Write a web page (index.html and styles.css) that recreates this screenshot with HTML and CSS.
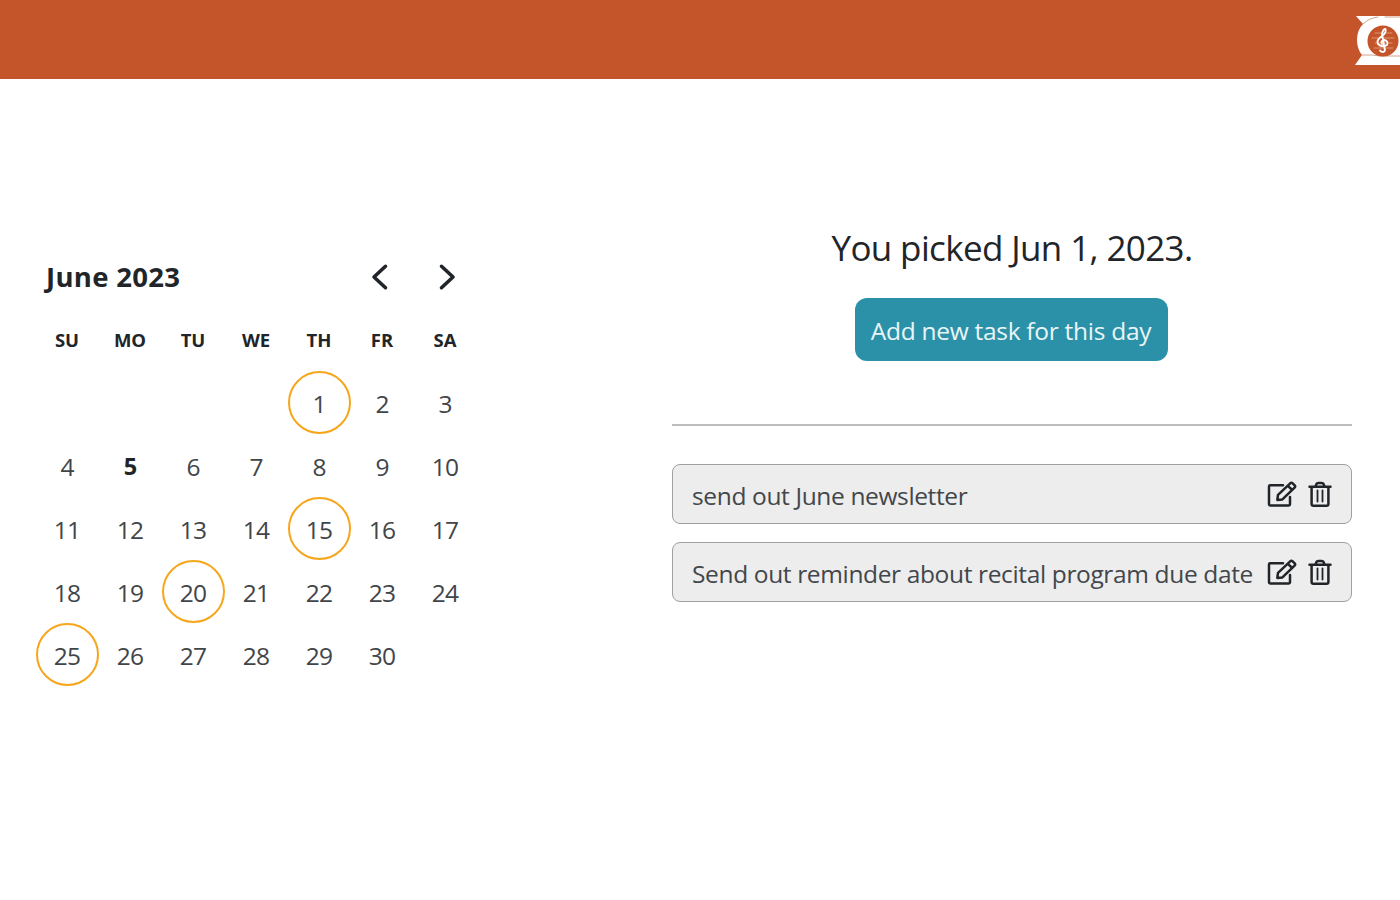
FILE: index.html
```
<!DOCTYPE html>
<html lang="en">
<head>
<meta charset="utf-8">
<title>Calendar</title>
<link rel="stylesheet" href="styles.css">
</head>
<body>
<svg class="defs" width="0" height="0" aria-hidden="true">
  <symbol id="edit" viewBox="0 0 30 28">
    <path d="M16 4.300H3.200Q2 4.300 2 5.500V23.300Q2 24.500 3.200 24.500H21.800Q23 24.500 23 23.300V16"/>
    <path d="M10.300 18.900L11 13.900L23.200 2.300Q24.400 1.300 25.600 2.300L27.700 4.400Q28.700 5.600 27.600 6.700L15.400 18.400Z M20.800 4.800L25.300 9"/>
  </symbol>
  <symbol id="trash" viewBox="0 0 24 28">
    <path d="M1.500 5.800H22.500M3.600 6V23Q3.600 24.800 5.400 24.800H18.600Q20.400 24.800 20.400 23V6M7.500 5.300L8.500 2.900Q9 1.900 10.200 1.900H13.800Q15 1.900 15.500 2.900L16.500 5.300"/>
    <path class="thin" d="M9.500 9.500V20.500M14.500 9.500V20.500"/>
  </symbol>
</svg>
<header class="topbar">
  <svg class="logo" width="45" height="52" viewBox="0 0 45 52">
    <path class="band" d="M1 1H45V50H0L7 40Q2 34 2 25Q2 15 8 9Z"/>
    <path class="seam" d="M8 9Q14 3 23 2M7 40H17L25 41H45M30 2H45"/>
    <circle class="disc" cx="28" cy="26" r="15.500"/>
    <path class="staff" d="M20 18H37M17 23H39M20 28H37M19 33H38"/>
    <path class="clef" d="M25 35.500Q28 38.500 30 35.500L27 19Q28 14 30.500 14Q31.500 18 27 21Q21 25 23 29Q27 33 32 30Q34 26 29 25Q25 26 27 29"/>
  </svg>
</header>
<main class="page">
  <section class="calendar">
    <div class="caption">
      <h2 class="month">June 2023</h2>
      <div class="nav">
        <svg width="18" height="28" viewBox="0 0 18 28"><path d="M14.500 3.300L3 14L14.500 24.700"/></svg>
        <svg width="18" height="28" viewBox="0 0 18 28"><path d="M3.500 3.300L15 14L3.500 24.700"/></svg>
      </div>
    </div>
    <div class="grid weekdays"><span>SU</span><span>MO</span><span>TU</span><span>WE</span><span>TH</span><span>FR</span><span>SA</span></div>
    <div class="grid days">
      <span class="day first marked">1</span><span class="day">2</span><span class="day">3</span>
      <span class="day">4</span><span class="day today">5</span><span class="day">6</span><span class="day">7</span><span class="day">8</span><span class="day">9</span><span class="day">10</span>
      <span class="day">11</span><span class="day">12</span><span class="day">13</span><span class="day">14</span><span class="day marked">15</span><span class="day">16</span><span class="day">17</span>
      <span class="day">18</span><span class="day">19</span><span class="day marked">20</span><span class="day">21</span><span class="day">22</span><span class="day">23</span><span class="day">24</span>
      <span class="day marked">25</span><span class="day">26</span><span class="day">27</span><span class="day">28</span><span class="day">29</span><span class="day">30</span>
    </div>
  </section>
  <section class="tasks">
    <h1 class="picked">You picked Jun 1, 2023.</h1>
    <button class="add">Add new task for this day</button>
    <div class="rule"></div>
    <div class="task"><span class="label">send out June newsletter</span><svg class="icon" width="30" height="28"><use href="#edit"/></svg><svg class="icon" width="24" height="28"><use href="#trash"/></svg></div>
    <div class="task"><span class="label">Send out reminder about recital program due date</span><svg class="icon" width="30" height="28"><use href="#edit"/></svg><svg class="icon" width="24" height="28"><use href="#trash"/></svg></div>
  </section>
</main>
</body>
</html>
```
FILE: styles.css
```
* { box-sizing: border-box; }
body { margin: 0; height: 900px; overflow: hidden; background: #fff; color: #212529; font-family: "Open Sans", "Noto Sans", sans-serif; }
.defs { display: block; height: 0; }
svg { fill: none; stroke: #212529; stroke-linejoin: round; stroke-linecap: round; flex: none; }
.topbar { height: 79px; background: #c4542a; display: flex; justify-content: flex-end; padding-top: 15px; }
.band { fill: #fff; stroke: none; }
.seam { stroke: #c98b72; stroke-width: .8; }
.disc { fill: #c4542a; stroke: none; }
.staff { stroke: #e7a68b; stroke-width: .8; }
.clef { stroke: #fff; stroke-width: 1.8; }
.page { display: flex; justify-content: space-between; padding: 0 48px 0 35.5px; }
.calendar { width: 441px; padding-top: 167px; }
.caption { height: 62px; padding: 0 20.5px 0 10.5px; display: flex; align-items: center; justify-content: space-between; }
.month { margin: 0; font-size: 27.500px; line-height: 38px; font-weight: 700; letter-spacing: .3px; }
.nav { display: flex; gap: 49px; }
.nav svg { stroke-width: 3.6; }
.grid { display: grid; grid-template-columns: repeat(7, 63px); text-align: center; }
.weekdays { height: 62.500px; line-height: 63px; font-size: 18.500px; font-weight: 700; }
.days { grid-auto-rows: 63px; }
.day { border-radius: 50%; line-height: 65px; font-size: 24.500px; letter-spacing: -.8px; color: #414549; }
.first { grid-column: 5; }
.marked { border: 2px solid #f7a61b; line-height: 61px; }
.today { font-weight: 700; font-size: 23.500px; color: #212529; }
.tasks { width: 680px; padding-top: 144px; display: flex; flex-direction: column; align-items: center; }
.picked { margin: 0; font-size: 35px; line-height: 50px; font-weight: 400; letter-spacing: -.63px; white-space: nowrap; }
.add { width: 313px; height: 63px; margin: 25px 2px 0 0; padding: 1px 0 0; border: 0; border-radius: 12px; background: #2b91a9; color: #e9f5f7; font: 24.500px "Open Sans", "Noto Sans", sans-serif; letter-spacing: -.28px; white-space: nowrap; }
.rule { width: 680px; height: 2px; margin: 63px 0 38px; background: #bcbdbe; }
.task { width: 680px; height: 60px; margin-bottom: 18px; padding: 0 19px 0 18px; display: flex; align-items: center; gap: 10px; border: 1px solid #a0a0a0; border-radius: 8px; background: #ededed; }
.label { flex: 1; min-width: 0; padding: 3px 0 0 1px; font-size: 24.500px; line-height: 34px; letter-spacing: -.36px; color: #42474b; white-space: nowrap; }
.icon { stroke-width: 2.5; margin-top: 2px; }
.icon + .icon { margin-left: 1px; }
.thin { stroke-width: 1.8; }
```
